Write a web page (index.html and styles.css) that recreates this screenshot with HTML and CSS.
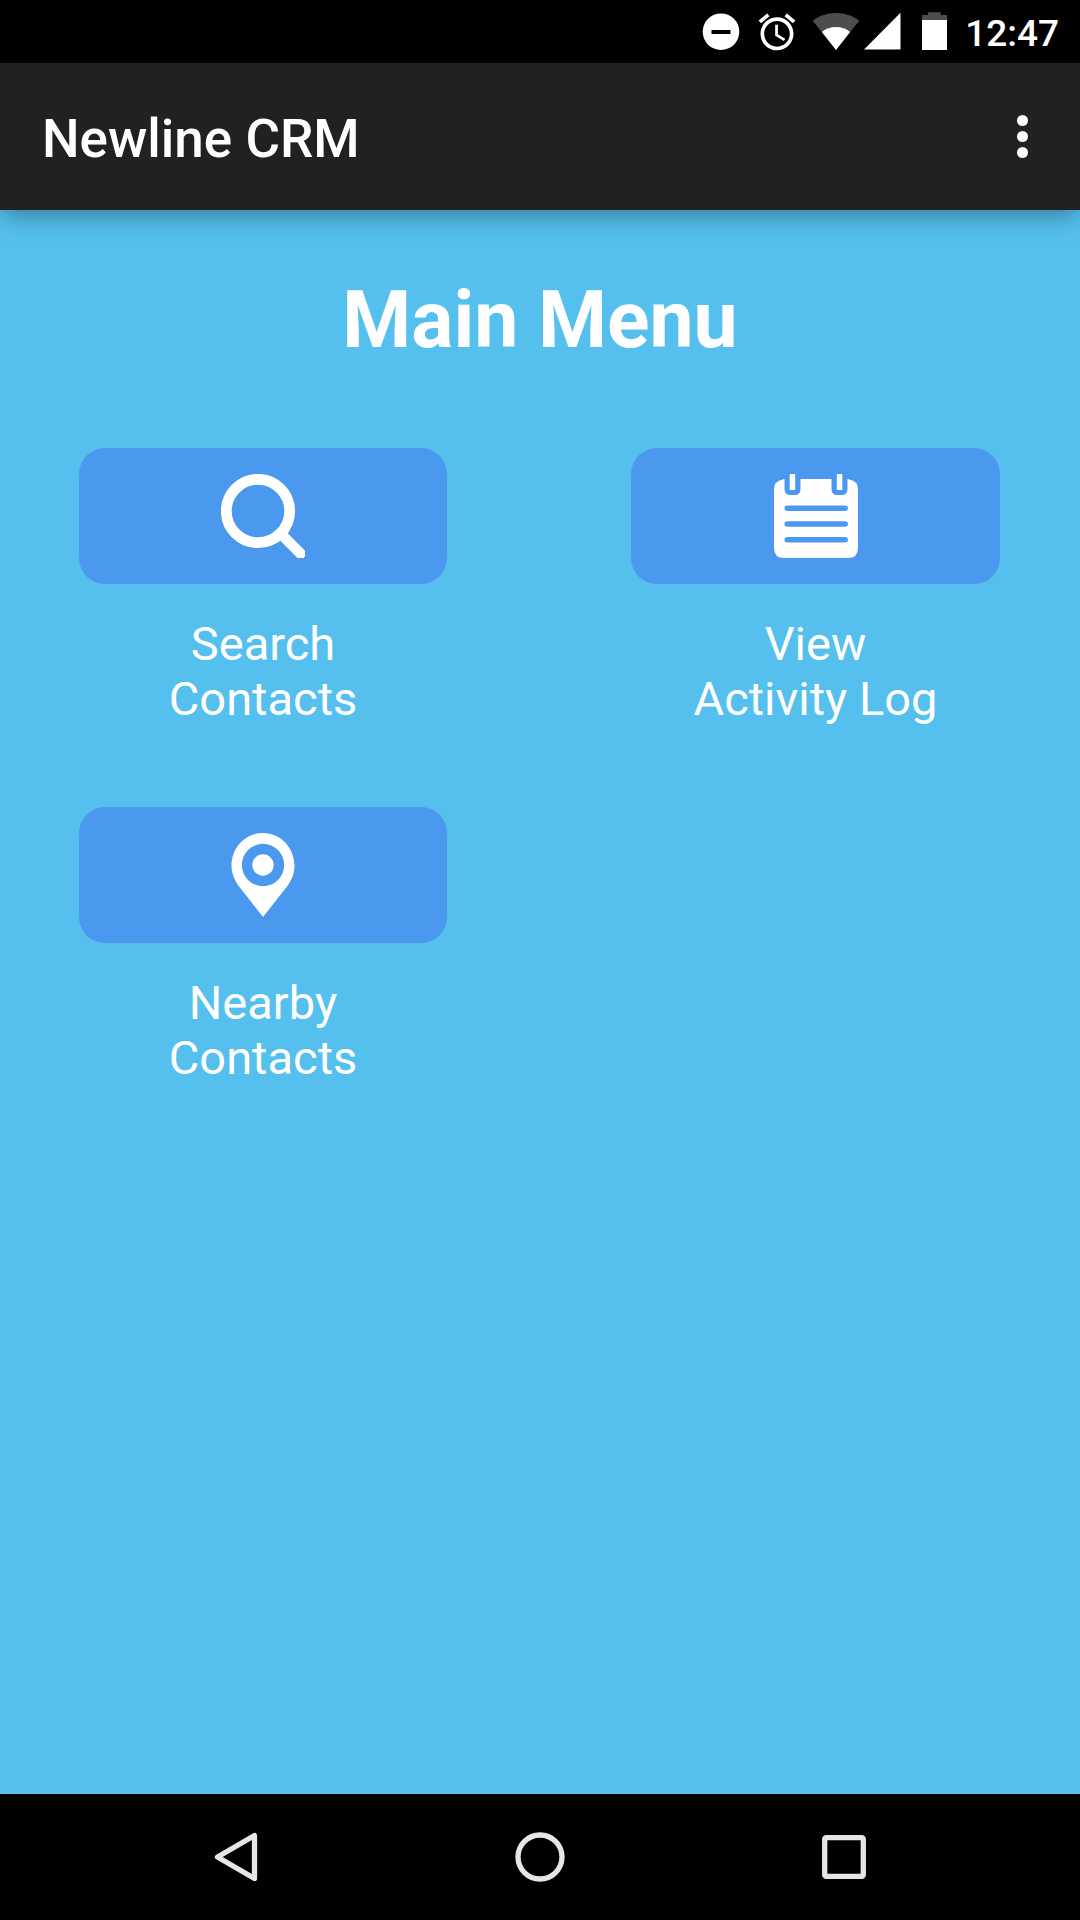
FILE: index.html
```
<!DOCTYPE html>
<html lang="en">
<head>
    <meta charset="UTF-8">
    <meta name="viewport" content="width=device-width, initial-scale=1.0">
    <title>Newline CRM</title>
    <link rel="stylesheet" href="styles.css">
</head>
<body>
    <div class="status-bar">
        <svg class="dnd" width="38" height="40" viewBox="0 0 38 40">
            <circle cx="19" cy="19.7" r="18.3" fill="#fff"/>
            <path d="M9.5 18h19v4h-19z" fill="#000"/>
        </svg>
        <svg class="alarm" width="44" height="44" viewBox="0 0 24 24" fill="#fff">
            <path d="M22 5.72l-4.6-3.86-1.29 1.53 4.6 3.86L22 5.72zM7.88 3.39L6.6 1.86 2 5.71l1.29 1.53 4.59-3.85zM12.5 8H11v6l4.75 2.85.75-1.23-4-2.37V8zM12 4c-4.97 0-9 4.03-9 9s4.02 9 9 9c4.97 0 9-4.03 9-9s-4.03-9-9-9zm0 16c-3.87 0-7-3.13-7-7s3.13-7 7-7 7 3.13 7 7-3.13 7-7 7z"/>
        </svg>
        <svg class="wifi" width="48" height="40" viewBox="0 0 48 40">
            <path d="M24 38L.8 8.7C7.2 3.8 15.2 1 24 1s16.8 2.8 23.2 7.7z" fill="#4d4d4d"/>
            <path d="M24 38L9.9 20C13.8 16.8 18.7 15 24 15s10.2 1.8 14.1 5z" fill="#fff"/>
        </svg>
        <svg class="signal" width="38" height="40" viewBox="0 0 38 40">
            <path d="M0 37.5h36.500V.8z" fill="#fff"/>
        </svg>
        <svg class="battery" width="25" height="40" viewBox="0 0 25 40">
            <path d="M0 8V3h6V.3h12.700V3H25v5z" fill="#4d4d4d"/>
            <path d="M0 8h25v30H0z" fill="#fff"/>
        </svg>
        <span class="clock">12:47</span>
    </div>

    <div class="action-bar">
        <span class="app-name">Newline CRM</span>
        <div class="overflow">
            <span></span>
            <span></span>
            <span></span>
        </div>
    </div>

    <div class="content">
        <h1>Main Menu</h1>
        <div class="menu">
            <div class="item">
                <div class="tile">
                    <svg width="84" height="84" viewBox="0 0 84 84" fill="none" stroke="#fff">
                        <circle cx="37" cy="37" r="31.7" stroke-width="10.8"/>
                        <path d="M60 60L79.5 79.5" stroke-width="10.5" stroke-linecap="round"/>
                    </svg>
                </div>
                <p>Search<br>Contacts</p>
            </div>
            <div class="item">
                <div class="tile">
                    <svg width="84" height="84" viewBox="0 0 84 84">
                        <path d="M10 5H74Q84 7 84 15V74Q84 84 74 84H10Q0 84 0 74V15Q0 7 10 5z" fill="#fff"/>
                        <path d="M10.5 0h16v15q0 6-6 6h-4q-6 0-6-6zM57.5 0h16v15q0 6-6 6h-4q-6 0-6-6z" fill="#4b99ee"/>
                        <path d="M15.7 0h5.5v16h-5.5zM62.8 0h5.5v16h-5.5z" fill="#fff"/>
                        <path d="M13.2 34.2h58M13.2 50h58M13.2 65.7h58" stroke="#4b99ee" stroke-width="5.5" stroke-linecap="round"/>
                    </svg>
                </div>
                <p>View<br>Activity Log</p>
            </div>
            <div class="item">
                <div class="tile">
                    <svg width="84" height="84" viewBox="0 0 84 84">
                        <path d="M42 0C24.5 0 10.5 14.5 10.5 33C10.5 42 15 50 20 56L42 84L64 56C69 50 73.5 42 73.5 33C73.5 14.5 59.5 0 42 0z" fill="#fff"/>
                        <circle cx="42" cy="32" r="21.2" fill="#4b99ee"/>
                        <circle cx="42" cy="32" r="10.7" fill="#fff"/>
                    </svg>
                </div>
                <p>Nearby<br>Contacts</p>
            </div>
        </div>
    </div>

    <div class="nav-bar">
        <svg width="60" height="60" viewBox="0 0 60 60">
            <path d="M48.5 8.5V51.5L11.5 30z"/>
        </svg>
        <svg width="60" height="60" viewBox="0 0 60 60">
            <circle cx="30" cy="30" r="22"/>
        </svg>
        <svg width="60" height="60" viewBox="0 0 60 60">
            <rect x="10.7" y="10.7" width="38.6" height="38.6" rx="1.5"/>
        </svg>
    </div>
</body>
</html>
```
FILE: styles.css
```
* {
    box-sizing: border-box;
}
body {
    margin: 0;
    height: 1920px;
    display: flex;
    flex-direction: column;
    overflow: hidden;
    background: #55c0ee;
    color: white;
    font-family: Roboto, sans-serif;
}
svg {
    display: block;
    flex: none;
}
.status-bar {
    height: 63px;
    padding: 12px 21px 0 0;
    display: flex;
    justify-content: flex-end;
    align-items: flex-start;
    background: black;
}
.alarm {
    margin: -2px 0 0 15px;
}
.wifi {
    margin-left: 13px;
}
.signal {
    margin-left: 4px;
}
.battery {
    margin-left: 20px;
}
.clock {
    margin-left: 18px;
    font-size: 37px;
    font-weight: 500;
    line-height: 43px;
}
.action-bar {
    position: relative; /* keeps the shadow above the content */
    height: 147px;
    padding: 0 52px 0 42px;
    display: flex;
    justify-content: space-between;
    align-items: center;
    background: #212121;
    box-shadow: 0 8px 22px -2px rgba(0, 0, 0, 0.34);
}
.app-name {
    font-size: 53px;
    font-weight: 500;
    line-height: 62px;
    padding-top: 5px;
}
.overflow {
    display: flex;
    flex-direction: column;
    gap: 5px;
}
.overflow span {
    width: 11px;
    height: 11px;
    border-radius: 50%;
    background: white;
}
.content {
    flex: 1;
    padding: 64px 80px 0 79px;
}
h1 {
    margin: 0 0 82px;
    padding-left: 1px;
    font-size: 78.75px;
    font-weight: 700;
    line-height: 92px;
    text-align: center;
}
.menu {
    display: grid;
    grid-template-columns: 368px 369px;
    justify-content: space-between;
    row-gap: 81px;
}
.tile {
    height: 136px;
    border-radius: 26px;
    display: flex;
    justify-content: center;
    align-items: center;
    background: #4b99ee;
}
.item p {
    margin: 32px 0 0;
    font-size: 47px;
    line-height: 55px;
    text-align: center;
}
.nav-bar {
    height: 126px;
    padding: 0 206px;
    display: flex;
    justify-content: space-between;
    align-items: center;
    background: black;
}
.nav-bar svg {
    fill: none;
    stroke: #e6e6e6;
    stroke-width: 5.3;
    stroke-linejoin: round;
}
```
